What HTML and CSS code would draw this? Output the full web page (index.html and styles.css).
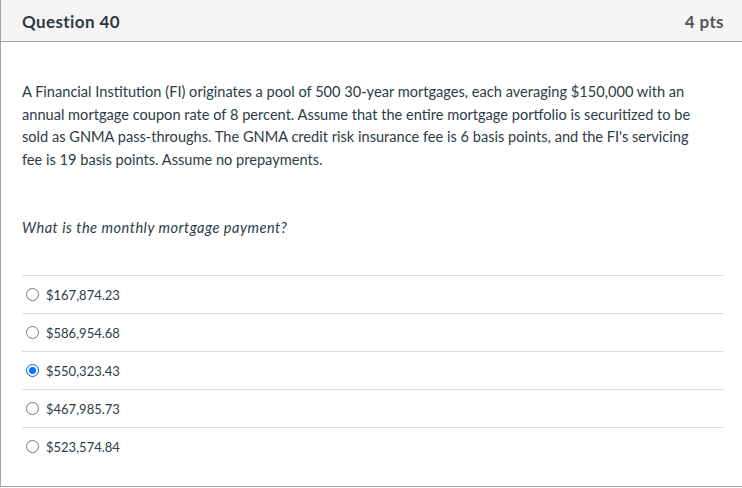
FILE: index.html
```html
<!DOCTYPE html>
<html>
<head>
<meta charset="utf-8">
<link rel="stylesheet" href="styles.css">
</head>
<body>
<div class="question">
  <div class="header">
    <span class="title">Question 40</span>
    <span class="pts">4 pts</span>
  </div>
  <div class="content">
    <p class="text">A Financial Institution (FI) originates a pool of 500 30-year mortgages, each averaging $150,000 with an annual mortgage coupon rate of 8 percent. Assume that the entire mortgage portfolio is securitized to be sold as GNMA pass-throughs. The GNMA credit risk insurance fee is 6 basis points, and the FI's servicing fee is 19 basis points. Assume no prepayments.</p>
    <p class="ask">What is the monthly mortgage payment?</p>
    <div class="answers">
      <label class="answer"><span class="radio"></span><span>$167,874.23</span></label>
      <label class="answer"><span class="radio"></span><span>$586,954.68</span></label>
      <label class="answer"><span class="radio checked"></span><span>$550,323.43</span></label>
      <label class="answer"><span class="radio"></span><span>$467,985.73</span></label>
      <label class="answer"><span class="radio"></span><span>$523,574.84</span></label>
    </div>
  </div>
</div>
</body>
</html>
```
FILE: styles.css
```css
html, body {
  margin: 0;
  padding: 0;
  background: #fff;
}
body {
  font-family: Lato, "Noto Sans", sans-serif;
  color: #2d3b45;
  width: 742px;
  height: 488px;
  overflow: hidden;
}
.question {
  border-left: 1px solid #a5a5a5;
  border-bottom: 1px solid #a5a5a5;
  box-sizing: border-box;
  height: 487px;
}
.header {
  display: flex;
  justify-content: space-between;
  align-items: center;
  height: 42px;
  box-sizing: border-box;
  background: #f5f5f5;
  border-bottom: 1px solid #a5a5a5;
  padding: 1px 18px 0 21px;
  font-weight: 700;
  font-size: 17px;
  letter-spacing: 0.4px;
}
.title {
  color: #2d3b45;
}
.pts {
  color: #555;
}
.content {
  padding: 39px 18px 0 21px;
}
.text {
  margin: 0 12px 0 0;
  font-size: 14.6px;
  line-height: 22.5px;
}
.ask {
  margin: 46px 0 0;
  font-size: 14.6px;
  font-style: italic;
  letter-spacing: 0.5px;
  line-height: 22px;
}
.answers {
  margin-top: 36px;
}
.answer {
  display: flex;
  align-items: center;
  gap: 7px;
  height: 38px;
  border-top: 1px solid #dcdcdc;
  padding-left: 4px;
  font-size: 13px;
  box-sizing: border-box;
}
.radio {
  width: 11px;
  height: 11px;
  border: 1px solid #767676;
  border-radius: 50%;
  background: #fff;
  box-sizing: content-box;
  position: relative;
  flex: none;
}
.radio.checked {
  border-color: #0060df;
}
.radio.checked::after {
  content: "";
  position: absolute;
  left: 2px;
  top: 2px;
  width: 7px;
  height: 7px;
  border-radius: 50%;
  background: #0075ff;
}
```
